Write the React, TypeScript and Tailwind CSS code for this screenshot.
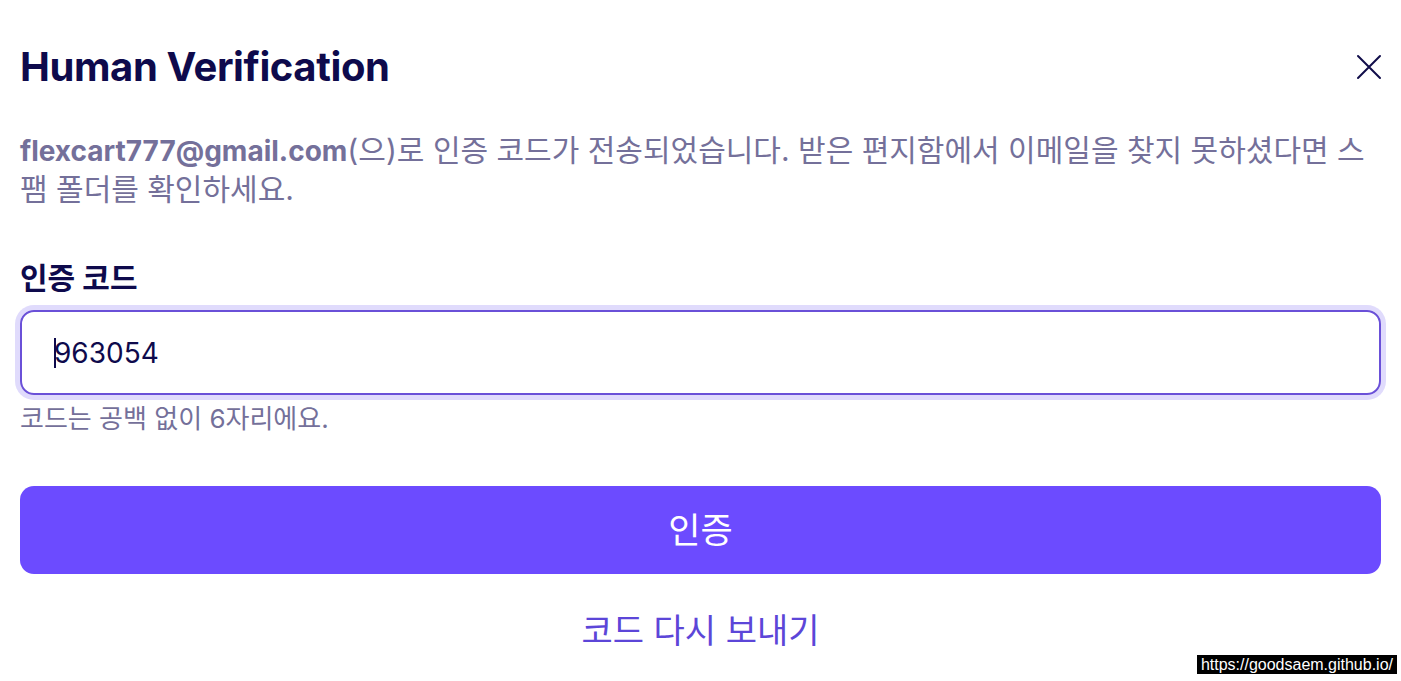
import React, { useState } from 'react';

const font = "font-['Inter','Noto_Sans_CJK_KR',sans-serif]";

const CloseIcon: React.FC = () => (
  <svg width="26" height="26" viewBox="0 0 26 26" fill="none" stroke="#110d4a" strokeWidth="2" strokeLinecap="round">
    <path d="M2 2L24 24M24 2L2 24" />
  </svg>
);

const App: React.FC = () => {
  const [code, setCode] = useState('963054');

  return (
    <div className={`relative min-h-[681px] bg-white px-5 pt-[43px] ${font}`}>
      <div className="flex items-center justify-between">
        <h1 className="text-[40px] leading-[48px] font-bold tracking-[-0.4px] text-[#0e0a4c]">Human Verification</h1>
        <button className="-mr-[1px]" aria-label="Close">
          <CloseIcon />
        </button>
      </div>

      <p className="mt-[40px] text-[30px] leading-[38px] text-[#74709a]">
        <span className="text-[28px] font-bold">flexcart777@gmail.com</span>
        <span>(으)로 인증 코드가 전송되었습니다. 받은 편지함에서 이메일을 찾지 못하셨다면 스</span>
        <span>팸 폴더를 확인하세요.</span>
      </p>

      <label className="mt-[50px] block text-[30px] leading-[40px] font-bold text-[#0e0a4c]">인증 코드</label>
      <div className="relative mt-[12px]">
        <input
          value={code}
          onChange={(e) => setCode(e.target.value)}
          className="block h-[85px] w-full rounded-[14px] border-2 border-[#6a50d8] px-8 text-[28px] text-[#0e0a4c] caret-transparent outline-none ring-[5px] ring-[#e0dbfc]"
        />
        {/* focused caret as in the capture */}
        <span className="pointer-events-none absolute left-[34px] top-[28px] h-[30px] w-[2px] bg-[#0e0a4c]" />
      </div>
      <p className="mt-[8px] text-[26px] leading-[32px] text-[#74709a]">코드는 공백 없이 6자리에요.</p>

      <button className="mt-[51px] flex h-[88px] w-full items-center justify-center rounded-[14px] bg-[#6c4bff] text-[35px] text-white">
        인증
      </button>

      <div className="mt-[35px] flex justify-center">
        <button className="text-[34px] leading-[44px] text-[#5c46d8]">코드 다시 보내기</button>
      </div>

      <div className="absolute bottom-[7px] right-[4px] bg-black px-[4px] font-['Liberation_Sans',sans-serif] text-[16px] leading-[19px] text-white">
        https://goodsaem.github.io/
      </div>
    </div>
  );
};

export default App;
